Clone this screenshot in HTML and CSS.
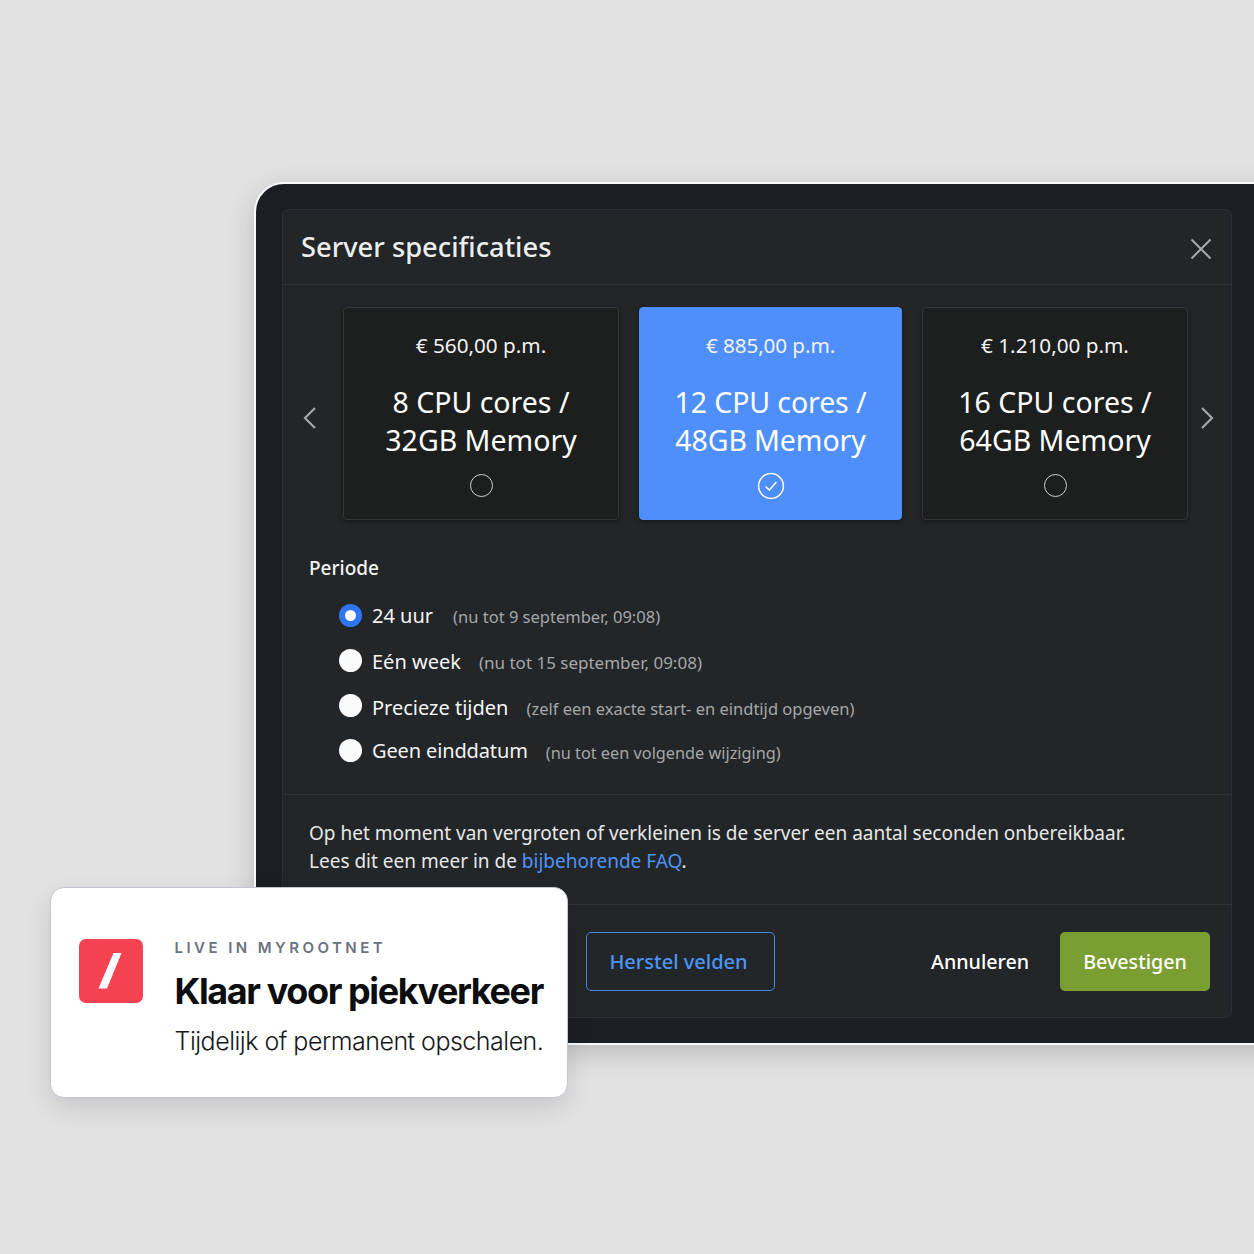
FILE: index.html
```html
<!DOCTYPE html>
<html lang="nl">
<head>
<meta charset="utf-8">
<title>Server specificaties</title>
<link rel="stylesheet" href="styles.css">
</head>
<body>
<main class="stage">
  <section class="window">
    <div class="modal">
      <header class="modal-head">
        <h1 class="modal-title">Server specificaties</h1>
        <button class="close" aria-label="Sluiten">
          <svg width="24" height="24" viewBox="0 0 24 24"><path d="M2.500 2.500 21.500 21.500M21.500 2.500 2.500 21.500"/></svg>
        </button>
      </header>
      <div class="carousel">
        <svg class="arrow" width="14" height="24" viewBox="0 0 14 24"><path d="M12 2 2 12 12 22"/></svg>
        <article class="plan plan-a">
          <p class="price">€ 560,00 p.m.</p>
          <h2 class="spec">8 CPU cores /<br>32GB Memory</h2>
          <span class="pick"></span>
        </article>
        <article class="plan plan-b active">
          <p class="price">€ 885,00 p.m.</p>
          <h2 class="spec">12 CPU cores /<br>48GB Memory</h2>
          <svg class="pick-on" width="28" height="28" viewBox="0 0 28 28"><circle cx="14" cy="14" r="12.400"/><path d="M8.600 14.600 12.400 18 19.400 10"/></svg>
        </article>
        <article class="plan plan-c">
          <p class="price">€ 1.210,00 p.m.</p>
          <h2 class="spec">16 CPU cores /<br>64GB Memory</h2>
          <span class="pick"></span>
        </article>
        <svg class="arrow" width="14" height="24" viewBox="0 0 14 24"><path d="M2 2 12 12 2 22"/></svg>
      </div>
      <section class="period">
        <h3 class="period-title">Periode</h3>
        <ul class="options">
          <li class="option first"><span class="radio on"></span><span class="opt-name">24 uur</span><span class="opt-note">(nu tot 9 september, 09:08)</span></li>
          <li class="option second"><span class="radio"></span><span class="opt-name">Eén week</span><span class="opt-note">(nu tot 15 september, 09:08)</span></li>
          <li class="option third"><span class="radio"></span><span class="opt-name">Precieze tijden</span><span class="opt-note">(zelf een exacte start- en eindtijd opgeven)</span></li>
          <li class="option fourth"><span class="radio"></span><span class="opt-name">Geen einddatum</span><span class="opt-note">(nu tot een volgende wijziging)</span></li>
        </ul>
      </section>
      <section class="notice">
        <p>Op het moment van vergroten of verkleinen is de server een aantal seconden onbereikbaar.<br>Lees dit een meer in de <a href="#">bijbehorende FAQ</a>.</p>
      </section>
      <footer class="actions">
        <button class="btn btn-outline">Herstel velden</button>
        <button class="btn btn-plain">Annuleren</button>
        <button class="btn btn-green">Bevestigen</button>
      </footer>
    </div>
  </section>
  <aside class="toast">
    <div class="logo"><svg width="64" height="64" viewBox="0 0 64 64"><path d="M34.500 14H42.500L28 49.500H19.500Z"/></svg></div>
    <div class="toast-text">
      <p class="eyebrow">LIVE IN MYROOTNET</p>
      <p class="toast-title">Klaar voor piekverkeer</p>
      <p class="toast-sub">Tijdelijk of permanent opschalen.</p>
    </div>
  </aside>
</main>
</body>
</html>
```
FILE: styles.css
```css
* { box-sizing: border-box; }
html, body { margin: 0; padding: 0; }
body { font-family: "Noto Sans", sans-serif; background: #e2e2e2; }
h1, h2, h3, p, ul { margin: 0; padding: 0; }
button { font: inherit; background: none; border: 0; padding: 0; }

.stage {
  position: relative;
  width: 1254px;
  height: 1254px;
  overflow: hidden;
  padding: 182px 0 0 254px;
  background: #e2e2e2;
}

.window {
  width: 1040px;
  height: 863px;
  padding: 25px 62px 25px 26px;
  border: 2px solid #f8f8f8;
  border-radius: 30px 0 0 30px;
  background: #1b1e22;
  box-shadow: 0 8px 28px rgba(0, 0, 0, .18);
}

.modal {
  width: 950px;
  height: 809px;
  display: flex;
  flex-direction: column;
  border: 1px solid #2c2f33;
  border-radius: 6px;
  background: #232628;
}

.modal-head {
  height: 75px;
  flex: none;
  padding: 0 18px 0 18px;
  display: flex;
  align-items: center;
  justify-content: space-between;
  border-bottom: 1px solid #2f3235;
}
.modal-title { font-size: 27.300px; font-weight: 500; color: #eceded; line-height: 1; }
.close { width: 24px; height: 24px; display: block; margin-top: 4px; }
.close svg { display: block; fill: none; stroke: #a8aaac; stroke-width: 2; }

.carousel {
  flex: none;
  display: flex;
  align-items: center;
  gap: 20px;
  padding: 22px 18px 0 20px;
}
.arrow { flex: none; fill: none; stroke: #a4a6a8; stroke-width: 2.200; margin-top: 8px; }
.carousel .arrow:first-child { margin-right: 6px; }
.carousel .arrow:last-child { margin-left: -8px; }

.plan {
  height: 213px;
  flex: none;
  display: flex;
  flex-direction: column;
  align-items: center;
  padding-top: 23px;
  border: 1px solid #33363a;
  border-radius: 4px;
  background: #1d1e1e;
  color: #fff;
  box-shadow: 0 2px 5px rgba(0, 0, 0, .35);
}
.plan-a { width: 276px; }
.plan-b { width: 263px; }
.plan-c { width: 266px; }
.active { background: #4f8ffb; border-color: #4f8ffb; }
.price { font-size: 20.700px; line-height: 28px; color: #f2f2f2; }
.spec { font-size: 28.500px; font-weight: 400; line-height: 38px; text-align: center; margin-top: 24px; }
.pick { width: 23px; height: 23px; margin-top: 15px; border: 1.300px solid #d0d0d0; border-radius: 50%; }
.pick-on { margin-top: 13px; fill: none; stroke: #fff; stroke-width: 1.500; }
.plan-b .price, .plan-b .spec { letter-spacing: -.1px; }

.period { flex: none; height: 274px; padding: 35px 0 0 26px; }
.period-title { font-size: 19px; font-weight: 500; line-height: 26px; color: #f2f2f2; }
.options { list-style: none; padding: 12px 0 0 30px; }
.option { height: 45px; display: flex; align-items: center; }
.radio { width: 23px; height: 23px; flex: none; margin-right: 10px; border-radius: 50%; background: #fbfbfb; }
.radio.on { background: #fff; border: 6.500px solid #2f74f3; }
.opt-name { font-size: 20px; color: #f4f4f4; margin-right: 18px; }
.opt-note { font-size: 16.500px; color: #a5a7a9; padding-top: 2px; }
.first .opt-name { margin-right: 20px; }
.second .opt-name { padding-top: 2px; }
.second .opt-note { font-size: 17px; padding-top: 4px; }
.third .opt-name { padding-top: 4px; }
.third .opt-note { padding-top: 6px; }
.fourth .opt-name { letter-spacing: -.13px; }
.fourth .opt-note { font-size: 16.300px; padding-top: 4px; }

.notice { flex: none; height: 111px; padding: 24px 26px 0; border-top: 1px solid #2f3235; border-bottom: 1px solid #2f3235; }
.notice p { font-size: 19px; line-height: 28px; color: #e6e7e7; }
.notice a { color: #4d94f5; text-decoration: none; }

.actions { flex: 1; display: flex; align-items: center; padding: 0 21px 0 303px; }
.btn { height: 59px; font-size: 19.700px; font-weight: 500; border-radius: 5px; }
.btn-outline { width: 189px; padding-right: 4px; font-size: 20px; color: #4c94f7; border: 1px solid #4585de; margin-right: auto; }
.btn-plain { width: 97px; color: #fff; margin-right: 32px; }
.btn-green { width: 150px; color: #fff; background: #7a9e31; }

.toast {
  position: absolute;
  left: 50px;
  top: 887px;
  width: 518px;
  height: 211px;
  display: flex;
  padding: 51px 0 0 28px;
  border: 1.500px solid #c3c7d2;
  border-radius: 14px;
  background: #fff;
  box-shadow: 0 10px 26px rgba(0, 0, 0, .12);
}
.logo { width: 64px; height: 64px; flex: none; margin-right: 31.500px; border-radius: 7px; background: #f44250; }
.logo svg { display: block; fill: #fff; }
.toast-text { font-family: Inter, sans-serif; }
.eyebrow { font-size: 15px; font-weight: 600; letter-spacing: 3.450px; line-height: 18px; color: #6b7280; }
.toast-title { font-size: 36px; font-weight: 700; letter-spacing: -1.400px; line-height: 44px; color: #0c0d0f; margin-top: 12px; }
.toast-sub { font-size: 25px; font-weight: 300; letter-spacing: -.5px; line-height: 32px; color: #15171a; margin-top: 12px; }
```
